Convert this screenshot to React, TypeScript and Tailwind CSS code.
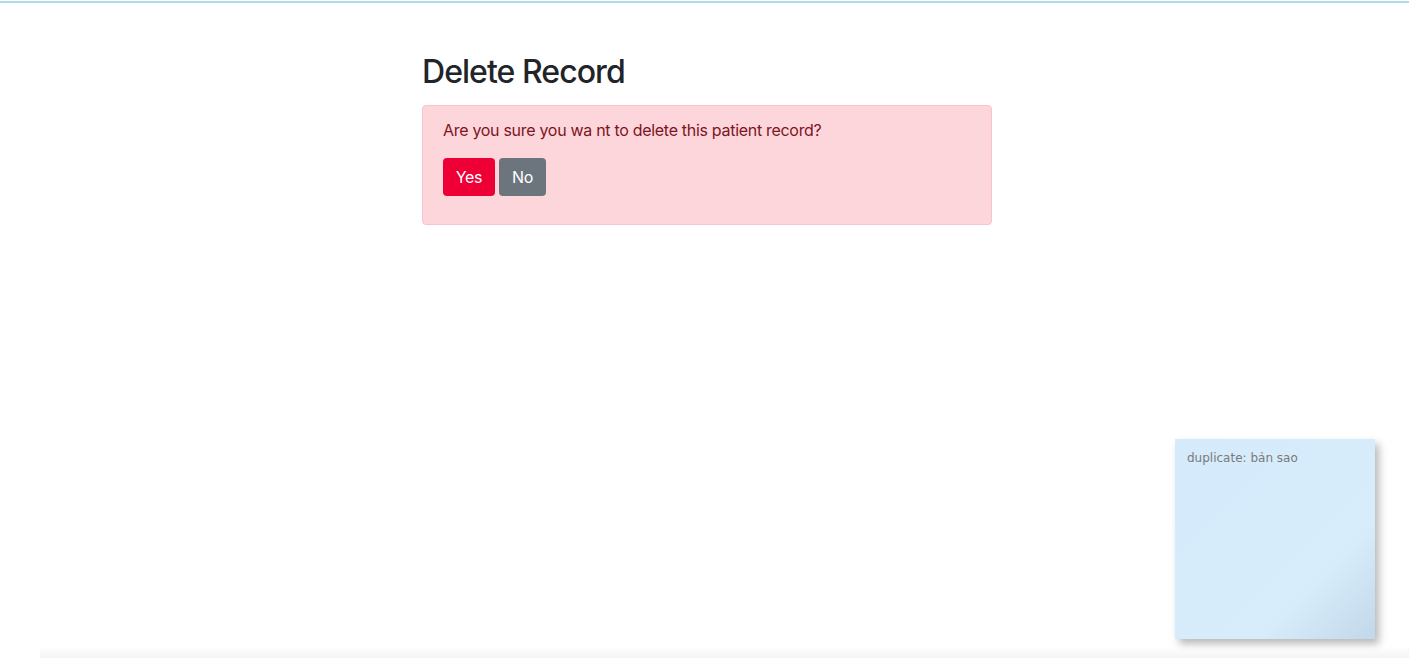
import React from "react";

// sticky note shown in the corner
function StickyNote({ text }: { text: string }) {
  return (
    <div className="absolute left-[1175px] top-[439px] h-[200px] w-[200px] bg-gradient-to-br from-[#d5eafa] via-[#d8edfc] via-70% to-[#c2d7e7] px-3 py-[11px] shadow-[4px_5px_8px_rgba(0,0,0,0.28)]">
      <p className="text-[12px] leading-4 text-[#7a7a7a]" style={{ fontFamily: '"DejaVu Sans", Verdana, sans-serif' }}>
        {text}
      </p>
    </div>
  );
}

export default function App() {
  return (
    <div
      className="relative h-[658px] w-full overflow-hidden bg-white text-[#212529]"
      style={{ fontFamily: 'Inter, "Liberation Sans", Arial, sans-serif' }}
    >
      {/* top border line */}
      <div className="mt-px h-[2px] w-full bg-[#b3dce9]" />

      <main className="ml-[422px] w-[570px] pt-[50px]">
        <h2 className="mb-[14px] text-[32px] font-medium leading-[38px] tracking-[-0.95px]">Delete Record</h2>

        <div className="rounded border border-[#f7c4cb] bg-[#fdd6db] px-5 pt-3 pb-[28px] text-[#7e1322]">
          <p className="mb-4 text-[16px] leading-6 tracking-[-0.3px]">Are you sure you wa nt to delete this patient record?</p>
          <div className="flex gap-1">
            <button className="h-[38px] w-[52px] rounded bg-[#ee0037] text-[16px] tracking-[-0.3px] text-white">Yes</button>
            <button className="h-[38px] w-[47px] rounded bg-[#6c757d] text-[16px] tracking-[-0.3px] text-white">No</button>
          </div>
        </div>
      </main>

      <StickyNote text="duplicate: bản sao" />

      {/* faint shadow at the bottom edge */}
      <div className="absolute bottom-0 left-[40px] right-0 h-[12px] bg-gradient-to-b from-transparent to-[#f4f4f4]" />
    </div>
  );
}
